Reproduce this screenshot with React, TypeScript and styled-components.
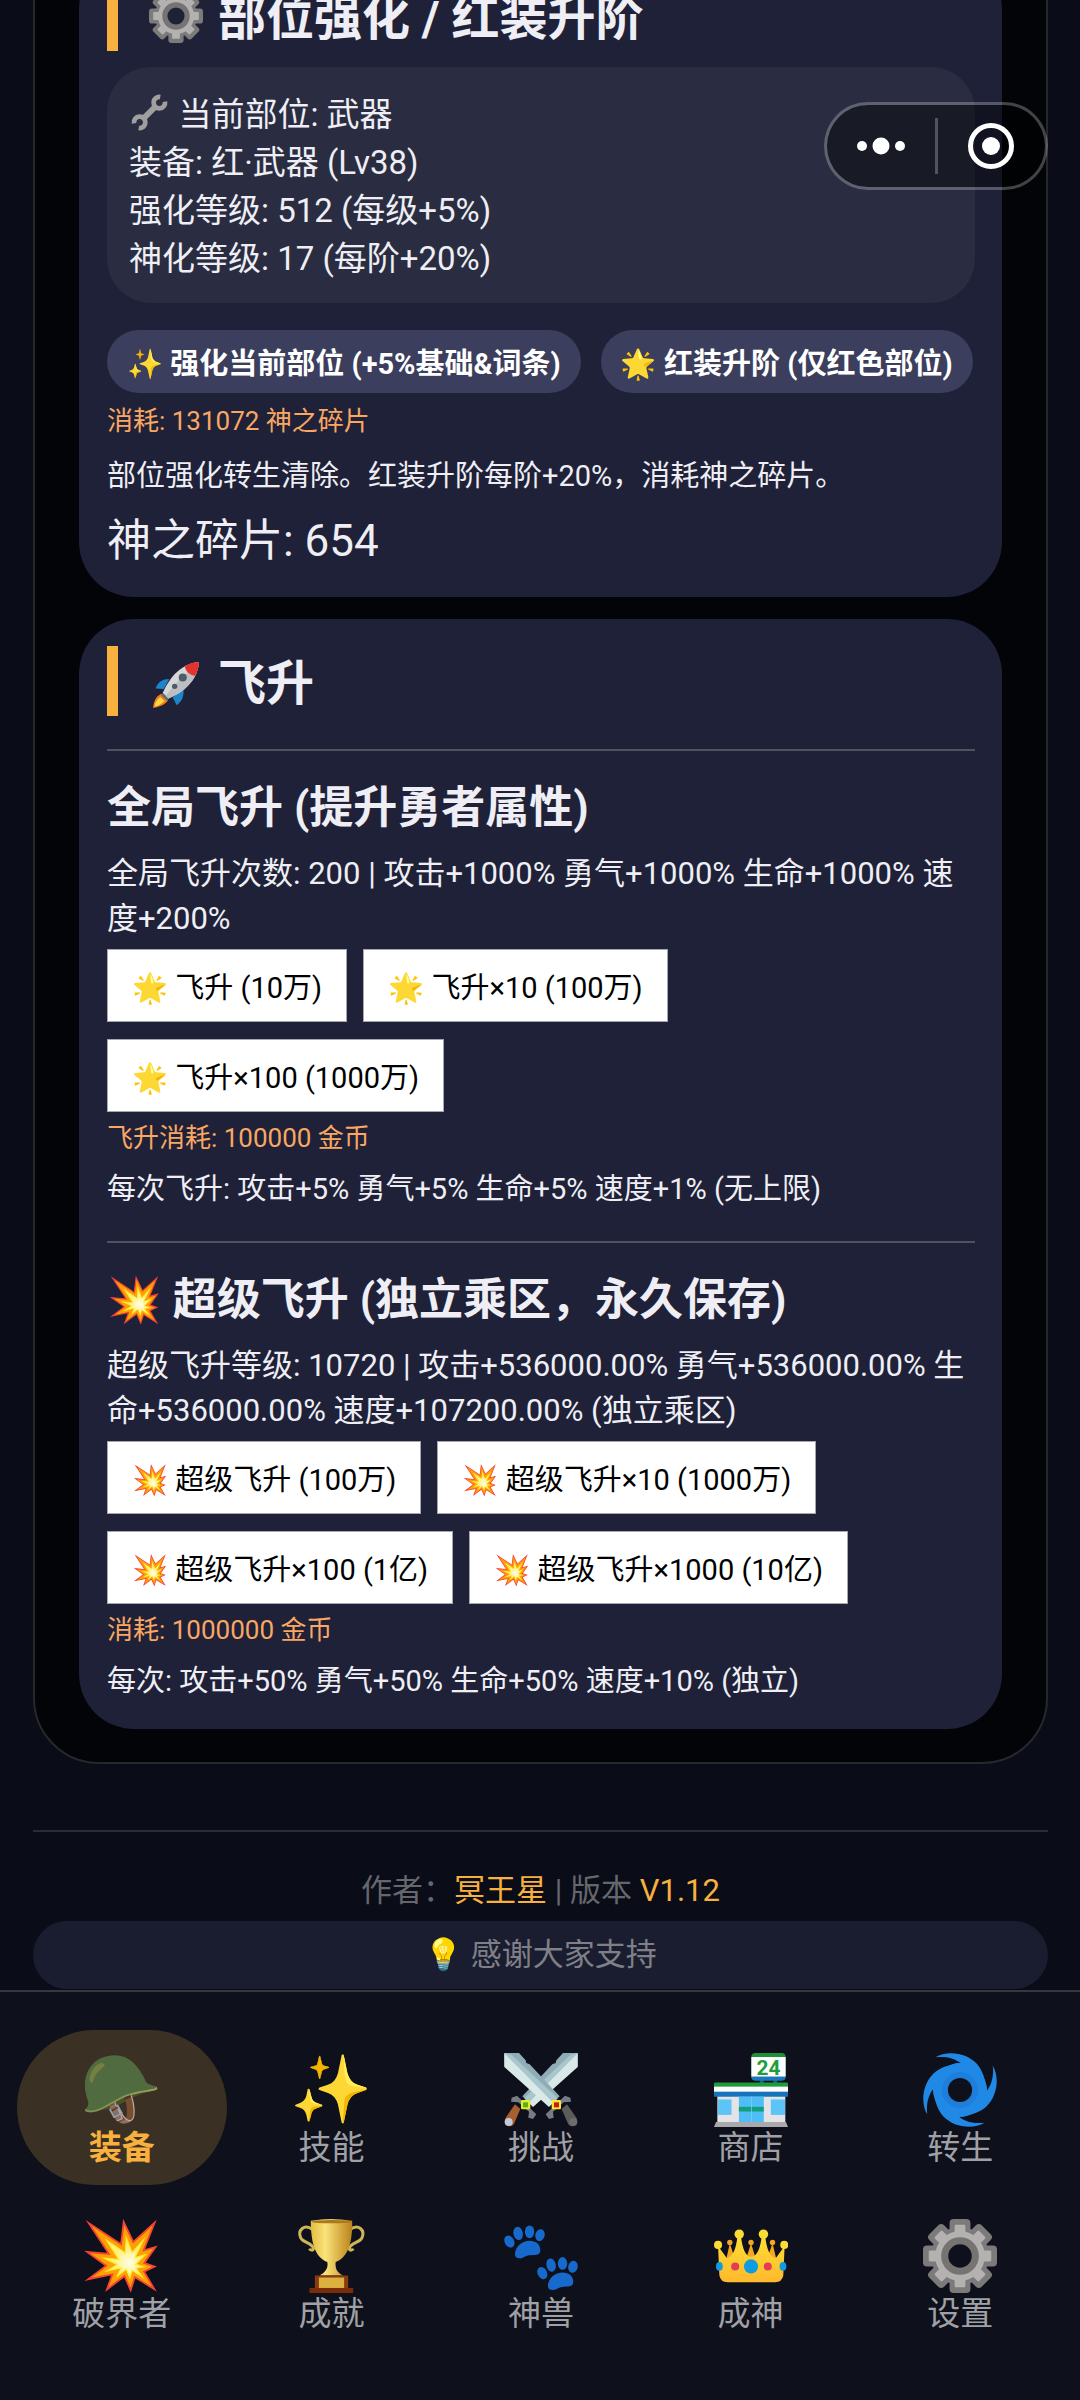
import React from "react";
import styled, { createGlobalStyle, css } from "styled-components";

const GlobalStyle = createGlobalStyle`
  * { box-sizing: border-box; }
  body {
    margin: 0;
    background: #0a0c18;
    color: #eeeef4;
    font-family: Roboto, "Noto Sans CJK SC", "Noto Color Emoji", sans-serif;
  }
  h2, h3, p { margin: 0; }
  button { font-family: inherit; margin: 0; cursor: pointer; }
`;

const Screen = styled.div`
  height: 100vh;
  display: flex;
  flex-direction: column;
  overflow: hidden;
`;

const Scroll = styled.main`
  flex: 1;
  min-height: 0;
  overflow: hidden;
  display: flex;
  flex-direction: column;
  justify-content: flex-end;
  padding: 0 32px 1px 33px;
`;

const Panel = styled.div`
  flex: none;
  display: flex;
  flex-direction: column;
  gap: 22px;
  padding: 33px 44px;
  background: #030407;
  border: 2px solid #27282d;
  border-radius: 66px;
`;

const Card = styled.section`
  padding: 27px 27px 26px 28px;
  background: #1e2137;
  border-radius: 55px;
`;

const Title = styled.h2`
  padding: 6px 0 0 28px;
  border-left: 11px solid #f8b03f;
  font-size: 48px;
  line-height: 64px;
  font-weight: 700;
`;

const Subtitle = styled.h3`
  font-size: 44px;
  line-height: 60px;
  font-weight: 700;
  margin-bottom: 13px;
`;

const Rule = styled.hr<{ $top: number }>`
  margin: ${(p) => p.$top}px 0 27px;
  border: 0;
  height: 2px;
  background: #50525f;
`;

const InfoBox = styled.div`
  margin: 16px 0 27px;
  padding: 24px 22px 20px;
  border-radius: 44px;
  background: #2a2d41;
  font-size: 33px;
  line-height: 48px;
`;

const PillRow = styled.div`
  display: flex;
  flex-wrap: wrap;
  gap: 20px;
  margin-bottom: 8px;
`;

const PillButton = styled.button`
  height: 63px;
  padding: 0 20px 2px;
  border: 0;
  border-radius: 33px;
  background: #3b3e5c;
  color: #fff;
  font-size: 29px;
  font-weight: 700;
  white-space: nowrap;
`;

const PlainRow = styled.div`
  display: flex;
  flex-wrap: wrap;
  gap: 17px 16px;
  margin: 8px 0 6px;
`;

const PlainButton = styled.button`
  height: 73px;
  padding: 0 24px 2px;
  border: 1px solid #a5a7b0;
  background: #fff;
  color: #000;
  font-size: 29px;
  white-space: nowrap;
`;

const Cost = styled.p`
  color: #f9a763;
  font-size: 26px;
  line-height: 40px;
`;

const Note = styled.p<{ $gap?: number }>`
  margin-top: ${(p) => p.$gap ?? 9}px;
  font-size: 29px;
  line-height: 44px;
`;

const Stats = styled.p`
  font-size: 31px;
  line-height: 45px;
`;

const Shards = styled.p`
  margin-top: 13px;
  font-size: 44px;
  line-height: 60px;
`;

const Footer = styled.footer`
  flex: none;
  margin-top: 66px;
  padding-top: 36px;
  border-top: 2px solid #2b2d36;
  color: #66676d;
  font-size: 31px;
  line-height: 46px;
  text-align: center;
`;

const Gold = styled.span`
  color: #f8b03f;
`;

const Thanks = styled.p`
  margin-top: 7px;
  line-height: 68px;
  border-radius: 34px;
  background: #1a1d2f;
  color: #7f8087;
`;

const Nav = styled.nav`
  flex: none;
  display: grid;
  grid-template-columns: repeat(5, 1fr);
  row-gap: 11px;
  padding: 38px 15px 49px 17px;
  background: #0e101b;
  border-top: 2px solid #363841;
`;

const NavItem = styled.button<{ $active?: boolean }>`
  height: 155px;
  padding: 2px 0 0;
  border: 0;
  border-radius: 78px;
  background: transparent;
  color: #a0a1a6;
  font-size: 33px;
  line-height: 38px;
  display: flex;
  flex-direction: column;
  align-items: center;
  justify-content: center;
  ${(p) =>
    p.$active &&
    css`
      background: #3a3024;
      color: #f8b03f;
      font-weight: 700;
    `}
`;

const NavIcon = styled.span`
  height: 78px;
  display: flex;
  align-items: center;
  font-size: 66px;
  line-height: 78px;
  font-weight: 400;

  svg {
    width: 74px;
    height: 74px;
  }
`;

const InlineIcon = styled.span<{ $size: number }>`
  display: inline-flex;
  align-items: center;
  justify-content: center;
  width: 1.25em;
  height: 1em;
  vertical-align: -0.16em;

  svg {
    flex: none;
    width: ${(p) => p.$size}px;
    height: ${(p) => p.$size}px;
  }
`;

const Capsule = styled.div`
  position: fixed;
  top: 102px;
  right: 32px;
  width: 224px;
  height: 88px;
  display: flex;
  align-items: center;
  border: 3px solid rgba(255, 255, 255, 0.25);
  border-radius: 44px;
  background: rgba(0, 0, 0, 0.42);
  background-clip: padding-box;
`;

const CapsuleButton = styled.button`
  flex: 1;
  height: 100%;
  padding: 0;
  border: 0;
  background: none;
  display: flex;
  align-items: center;
  justify-content: center;
`;

const CapsuleDivider = styled.span`
  width: 3px;
  height: 56px;
  background: rgba(255, 255, 255, 0.25);
`;

const eighths = [0, 45, 90, 135, 180, 225, 270, 315];
const quarters = [0, 90, 180, 270];

function Gear() {
  const id = React.useId();
  return (
    <svg viewBox="0 0 220 220" aria-hidden="true">
      <mask id={id}>
        <rect width="220" height="220" fill="#fff" />
        <circle cx="110" cy="110" r="35" fill="#000" />
      </mask>
      <g mask={`url(#${id})`}>
        <g fill="#7c7b7a">
          <circle cx="110" cy="110" r="86" />
          {eighths.map((a) => (
            <rect key={a} x="79" y="0" width="62" height="70" rx="12" transform={`rotate(${a} 110 110)`} />
          ))}
        </g>
        <g fill="#b3b2b0">
          <circle cx="110" cy="110" r="74" />
          {eighths.map((a) => (
            <rect key={a} x="94" y="17" width="32" height="60" rx="4" transform={`rotate(${a} 110 110)`} />
          ))}
        </g>
        <circle cx="110" cy="110" r="56" fill="#757473" />
      </g>
    </svg>
  );
}

function Wrench() {
  return (
    <svg viewBox="0 0 110 110" aria-hidden="true" fill="none" stroke="#a09f9e">
      <path d="M36 74 L74 36" strokeWidth="17" />
      <path d="M87 9 A17 17 0 1 0 101 23" strokeWidth="14" />
      <path d="M23 101 A17 17 0 1 0 9 87" strokeWidth="14" />
    </svg>
  );
}

function Rocket() {
  return (
    <svg viewBox="0 0 136 136" aria-hidden="true">
      <path d="M48 50 C26 50 14 60 8 78 L32 80 Z" fill="#1c84c9" />
      <path d="M90 80 C92 102 86 116 70 128 L58 104 Z" fill="#1c84c9" />
      <path d="M24 94 L44 114 C36 126 18 134 0 136 C2 118 8 102 24 94 Z" fill="#f47b20" />
      <path d="M22 104 L34 115 C26 124 14 130 4 132 C6 120 12 110 22 104 Z" fill="#ffd93b" />
      <path d="M30 90 L48 107 L42 115 L23 97 Z" fill="#5f6c73" />
      <path d="M136 0 C94 4 56 30 29 91 L46 108 C106 82 132 44 136 0 Z" fill="#d5d6d8" />
      <path d="M136 0 C106 24 66 62 38 100 L46 108 C106 82 132 44 136 0 Z" fill="#bcbec1" />
      <path d="M136 0 C120 1 106 5 94 13 C97 28 108 38 124 41 C132 28 136 14 136 0 Z" fill="#e5322d" />
      <circle cx="88" cy="46" r="12" fill="#4d5d66" />
      <circle cx="64" cy="72" r="8" fill="#4d5d66" />
    </svg>
  );
}

function Sword({ grip, pommel, gemRing, gem }: { grip: string; pommel: string; gemRing: string; gem: string }) {
  return (
    <g>
      <path d="M0 0 L44 0 L64 22 L66 30 L76 34 L166 130 L134 160 L0 40 Z" fill="#8eadb7" />
      <path d="M0 0 L0 42 L134 162 L148 148 Z" fill="#d8e9e8" />
      <path d="M0 0 L12 12 L148 150 L160 136 L22 6 Z" fill="#a9c6cc" />
      <path d="M172 168 L188 154 L216 194 Q224 212 208 219 Q196 222 190 210 Z" fill={grip} />
      <circle cx="207" cy="207" r="12" fill={pommel} />
      <path d="M198 134 L182 128 L124 184 L134 198 L148 194 L146 176 L178 148 L200 146 Z" fill="#777b88" />
      <rect x="142" y="141" width="28" height="28" rx="4" fill={gemRing} />
      <rect x="149" y="148" width="15" height="15" fill={gem} />
    </g>
  );
}

function Swords() {
  return (
    <svg viewBox="0 0 220 222" aria-hidden="true">
      <g transform="translate(220 0) scale(-1 1)">
        <Sword grip="#a6602f" pommel="#c3c9d6" gemRing="#e0ee2e" gem="#5fae12" />
      </g>
      <Sword grip="#5c5c5c" pommel="#6d6d6d" gemRing="#fbe632" gem="#c81e12" />
    </svg>
  );
}

const SignText = styled.text`
  font: 700 62px Roboto, sans-serif;
  fill: #1e9e3a;
`;

function Store() {
  return (
    <svg viewBox="0 0 220 220" aria-hidden="true">
      <path d="M136 78 h12 v14 h-12 Z M176 78 h12 v14 h-12 Z" fill="#0d5f9e" />
      <rect x="111" y="0" width="102" height="82" rx="12" fill="#1f8f3a" />
      <path d="M111 70 H213 Q213 82 201 82 H123 Q111 82 111 70 Z" fill="#1a76c4" />
      <rect x="111" y="12" width="102" height="58" fill="#fff" />
      <SignText x="162" y="64" textAnchor="middle">24</SignText>
      <rect x="10" y="124" width="202" height="82" fill="#e4e4e6" />
      <rect x="0" y="88" width="220" height="14" rx="4" fill="#1f9a3c" />
      <rect x="0" y="100" width="220" height="16" fill="#fff" />
      <rect x="0" y="115" width="220" height="15" fill="#1873bd" />
      <rect x="12" y="138" width="40" height="46" fill="#5cc4f7" />
      <rect x="169" y="138" width="42" height="46" fill="#5cc4f7" />
      <rect x="74" y="130" width="74" height="76" fill="#4fbdf6" />
      <rect x="74" y="160" width="74" height="14" fill="#12a07c" />
      <rect x="110" y="130" width="2" height="76" fill="#7fd2fa" />
      <path d="M6 205 H214 L220 220 H0 Z" fill="#a9a9ab" />
    </svg>
  );
}

function Cyclone() {
  const id = React.useId();
  return (
    <svg viewBox="0 0 220 220" aria-hidden="true">
      <mask id={id}>
        <rect width="220" height="220" fill="#fff" />
        <circle cx="110" cy="110" r="36" fill="#000" />
      </mask>
      <g mask={`url(#${id})`} fill="#2088e5">
        <circle cx="110" cy="110" r="80" />
        {quarters.map((a) => (
          <path
            key={a}
            d="M37 13 C70 -8 128 -2 160 32 C180 56 188 84 184 112 L110 110 L52 56 C68 40 88 31 112 30 C92 14 62 9 37 13 Z"
            transform={`rotate(${a} 110 110)`}
          />
        ))}
        <circle cx="110" cy="110" r="44" fill="none" stroke="#1b74d2" strokeWidth="18" opacity="0.5" />
      </g>
    </svg>
  );
}

function Trophy() {
  return (
    <svg viewBox="0 0 220 220" aria-hidden="true">
      <defs>
        <linearGradient id="trophy-gold" x1="0" x2="1">
          <stop offset="0" stopColor="#e2bd43" />
          <stop offset="0.35" stopColor="#fbe27a" />
          <stop offset="1" stopColor="#b98318" />
        </linearGradient>
      </defs>
      <g fill="none" stroke="#cdb55a" strokeWidth="9">
        <path d="M56 32 C30 12 10 34 20 56 C28 72 54 70 58 88 C56 96 48 92 46 88" />
        <path d="M166 32 C192 12 212 34 202 56 C194 72 168 70 164 88 C166 96 174 92 176 88" />
      </g>
      <path d="M50 5 Q111 -5 173 5 C174 64 164 112 124 128 C122 144 126 158 146 168 H76 C96 158 102 144 99 128 C60 112 50 64 50 5 Z" fill="url(#trophy-gold)" />
      <ellipse cx="111" cy="8" rx="58" ry="5" fill="#a87a1c" />
      <rect x="62" y="168" width="99" height="38" fill="#8a3a10" />
      <rect x="74" y="174" width="75" height="31" fill="#dcb140" />
      <path d="M46 205 H176 V220 H46 Z" fill="#7a2c08" />
    </svg>
  );
}

function Paw({ x, y }: { x: number; y: number }) {
  return (
    <g transform={`translate(${x} ${y})`}>
      <ellipse cx="16" cy="67" rx="14" ry="19" transform="rotate(-28 16 67)" />
      <ellipse cx="42" cy="43" rx="14" ry="20" transform="rotate(-12 42 43)" />
      <ellipse cx="76" cy="38" rx="14" ry="19" />
      <ellipse cx="107" cy="48" rx="14" ry="18" transform="rotate(14 107 48)" />
      <path d="M33 108 C30 88 50 66 74 65 C94 64 108 76 108 92 C108 110 92 106 74 108 C62 110 56 118 46 117 C38 117 34 114 33 108 Z" />
    </g>
  );
}

function Paws() {
  return (
    <svg viewBox="0 0 220 220" aria-hidden="true" fill="#1769cb">
      <Paw x={0} y={0} />
      <Paw x={98} y={94} />
    </svg>
  );
}

function Crown() {
  return (
    <svg viewBox="0 0 220 220" aria-hidden="true">
      <defs>
        <linearGradient id="crown-gold" x1="0" y1="0" x2="0" y2="1">
          <stop offset="0" stopColor="#fde036" />
          <stop offset="1" stopColor="#fdb92c" />
        </linearGradient>
      </defs>
      <g fill="#f5a623">
        <path d="M34 130 L47 72 L66 130 Z M92 130 L110 72 L128 130 Z M154 130 L174 72 L188 130 Z" />
        <circle cx="47" cy="70" r="8" />
        <circle cx="110" cy="70" r="8" />
        <circle cx="174" cy="70" r="8" />
      </g>
      <path d="M12 80 L38 116 C56 112 66 90 70 48 L80 48 C84 92 96 112 110 112 C126 112 138 92 142 48 L152 48 C156 90 166 112 184 116 L210 80 L206 168 Q202 188 182 188 H40 Q20 188 16 168 Z" fill="url(#crown-gold)" />
      <g fill="#fddb35">
        <circle cx="12" cy="77" r="12" />
        <circle cx="75" cy="45" r="14" />
        <circle cx="147" cy="45" r="14" />
        <circle cx="209" cy="77" r="12" />
      </g>
      <circle cx="110" cy="141" r="21" fill="#0f9be0" />
      <circle cx="63" cy="141" r="12" fill="#e33d55" />
      <circle cx="160" cy="141" r="12" fill="#e33d55" />
      <ellipse cx="16" cy="141" rx="10" ry="13" fill="#0f9be0" />
      <ellipse cx="205" cy="141" rx="10" ry="13" fill="#0f9be0" />
    </svg>
  );
}

const navItems: { icon: React.ReactNode; label: string }[] = [
  { icon: "🪖", label: "装备" },
  { icon: "✨", label: "技能" },
  { icon: <Swords />, label: "挑战" },
  { icon: <Store />, label: "商店" },
  { icon: <Cyclone />, label: "转生" },
  { icon: "💥", label: "破界者" },
  { icon: <Trophy />, label: "成就" },
  { icon: <Paws />, label: "神兽" },
  { icon: <Crown />, label: "成神" },
  { icon: <Gear />, label: "设置" },
];

const ascendActions = ["飞升 (10万)", "飞升×10 (100万)", "飞升×100 (1000万)"];
const superActions = [
  "超级飞升 (100万)",
  "超级飞升×10 (1000万)",
  "超级飞升×100 (1亿)",
  "超级飞升×1000 (10亿)",
];

export default function App() {
  return (
    <Screen lang="zh-CN">
      <GlobalStyle />
      <Scroll>
        <Panel>
          <Card>
            <Title>
              <InlineIcon $size={54}><Gear /></InlineIcon> 部位强化 / 红装升阶
            </Title>
            <InfoBox>
              <div>
                <InlineIcon $size={37}><Wrench /></InlineIcon> 当前部位: 武器
              </div>
              <div>装备: 红·武器 (Lv38)</div>
              <div>强化等级: 512 (每级+5%)</div>
              <div>神化等级: 17 (每阶+20%)</div>
            </InfoBox>
            <PillRow>
              <PillButton>✨ 强化当前部位 (+5%基础&amp;词条)</PillButton>
              <PillButton>🌟 红装升阶 (仅红色部位)</PillButton>
            </PillRow>
            <Cost>消耗: 131072 神之碎片</Cost>
            <Note $gap={13}>部位强化转生清除。红装升阶每阶+20%，消耗神之碎片。</Note>
            <Shards>神之碎片: 654</Shards>
          </Card>

          <Card>
            <Title>
              <InlineIcon $size={46}><Rocket /></InlineIcon> 飞升
            </Title>
            <Rule $top={33} />
            <Subtitle>全局飞升 (提升勇者属性)</Subtitle>
            <Stats>全局飞升次数: 200 | 攻击+1000% 勇气+1000% 生命+1000% 速度+200%</Stats>
            <PlainRow>
              {ascendActions.map((a) => (
                <PlainButton key={a}>🌟 {a}</PlainButton>
              ))}
            </PlainRow>
            <Cost>飞升消耗: 100000 金币</Cost>
            <Note>每次飞升: 攻击+5% 勇气+5% 生命+5% 速度+1% (无上限)</Note>
            <Rule $top={30} />
            <Subtitle>💥 超级飞升 (独立乘区，永久保存)</Subtitle>
            <Stats>
              超级飞升等级: 10720 | 攻击+536000.00% 勇气+536000.00% 生命+536000.00% 速度+107200.00% (独立乘区)
            </Stats>
            <PlainRow>
              {superActions.map((a) => (
                <PlainButton key={a}>💥 {a}</PlainButton>
              ))}
            </PlainRow>
            <Cost>消耗: 1000000 金币</Cost>
            <Note>每次: 攻击+50% 勇气+50% 生命+50% 速度+10% (独立)</Note>
          </Card>
        </Panel>

        <Footer>
          <p>
            作者：<Gold>冥王星</Gold> | 版本 <Gold>V1.12</Gold>
          </p>
          <Thanks>💡 感谢大家支持</Thanks>
        </Footer>
      </Scroll>

      <Nav>
        {navItems.map((n, i) => (
          <NavItem key={n.label} $active={i === 0}>
            <NavIcon>{n.icon}</NavIcon>
            {n.label}
          </NavItem>
        ))}
      </Nav>

      <Capsule>
        <CapsuleButton aria-label="更多">
          <svg width="48" height="18" viewBox="0 0 48 18" fill="#fff">
            <circle cx="5" cy="9" r="5" />
            <circle cx="24" cy="9" r="8.5" />
            <circle cx="43" cy="9" r="5" />
          </svg>
        </CapsuleButton>
        <CapsuleDivider />
        <CapsuleButton aria-label="关闭">
          <svg width="48" height="48" viewBox="0 0 48 48">
            <circle cx="24" cy="24" r="20.5" fill="none" stroke="#fff" strokeWidth="5" />
            <circle cx="24" cy="24" r="9" fill="#fff" />
          </svg>
        </CapsuleButton>
      </Capsule>
    </Screen>
  );
}
